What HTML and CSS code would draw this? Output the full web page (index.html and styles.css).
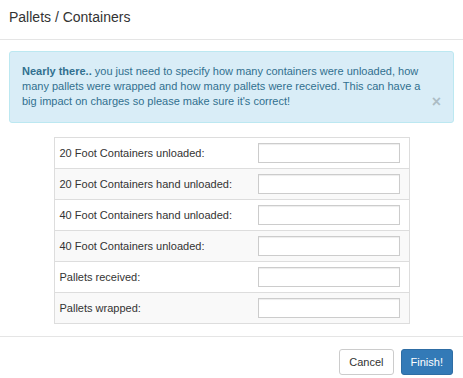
FILE: index.html
```html
<!DOCTYPE html>
<html lang="en">
<head>
    <meta charset="UTF-8">
    <meta name="viewport" content="width=device-width, initial-scale=1.0">
    <title>Pallets / Containers</title>
    <link rel="stylesheet" href="styles.css">
</head>
<body>
    <div class="modal-content">
        <div class="modal-header">
            <h4 class="modal-title">Pallets / Containers</h4>
        </div>
        <div class="modal-body">
            <div class="alert alert-info">
                <strong>Nearly there..</strong> you just need to specify how many containers were unloaded, how many pallets were wrapped and how many pallets were received. This can have a big impact on charges so please make sure it's correct!
                <button type="button" class="close">&times;</button>
            </div>

            <table class="table-striped">
                <colgroup>
                    <col class="col-label">
                    <col class="col-field">
                </colgroup>
                <tr>
                    <td>20 Foot Containers unloaded:</td>
                    <td><input type="text" name="twenty_unloaded"></td>
                </tr>
                <tr>
                    <td>20 Foot Containers hand unloaded:</td>
                    <td><input type="text" name="twenty_hand_unloaded"></td>
                </tr>
                <tr>
                    <td>40 Foot Containers hand unloaded:</td>
                    <td><input type="text" name="forty_hand_unloaded"></td>
                </tr>
                <tr>
                    <td>40 Foot Containers unloaded:</td>
                    <td><input type="text" name="forty_unloaded"></td>
                </tr>
                <tr>
                    <td>Pallets received:</td>
                    <td><input type="text" name="pallets_received"></td>
                </tr>
                <tr>
                    <td>Pallets wrapped:</td>
                    <td><input type="text" name="pallets_wrapped"></td>
                </tr>
            </table>
        </div>
        <div class="modal-footer">
            <button type="button" class="btn btn-default">Cancel</button>
            <button type="button" class="btn btn-primary">Finish!</button>
        </div>
    </div>
</body>
</html>
```

FILE: styles.css
```css
body {
    font-family: "Liberation Sans", Arial, sans-serif;
    font-size: 11px;
    line-height: 15px;
    color: #333;
    background-color: #fff;
    margin: 0;
}

.modal-header {
    padding: 7px 9px 12px 9px;
    border-bottom: 1px solid #e5e5e5;
}

    .modal-header .modal-title {
        margin: 0;
        font-size: 14px;
        font-weight: normal;
        line-height: 20px;
    }

.modal-body {
    padding: 11px 9px 12px 9px;
}

.alert {
    position: relative;
    padding: 12px 27px 13px 12px;
    margin-bottom: 14px;
    border: 1px solid transparent;
    border-radius: 3px;
}

.alert-info {
    color: #31708f;
    background-color: #d9edf7;
    border-color: #bce8f1;
}

    .alert .close {
        position: absolute;
        right: 12px;
        bottom: 13px;
        padding: 0;
        background: transparent;
        border: 0;
        font-family: "Liberation Sans", Arial, sans-serif;
        font-size: 16px;
        font-weight: bold;
        line-height: 15px;
        color: #000;
        opacity: .2;
        cursor: pointer;
    }

.table-striped {
    width: 80%;
    margin: 0 auto;
    table-layout: fixed;
    border-collapse: collapse;
    border: 1px solid #ddd;
}

    .table-striped .col-field {
        width: 156px;
    }

    .table-striped td {
        padding: 5px 6px 5px 5px;
        border-top: 1px solid #ddd;
        vertical-align: middle;
    }

    .table-striped tr:nth-child(even) td {
        background-color: #f9f9f9;
    }

    .table-striped input {
        display: block;
        width: 142px;
        height: 20px;
        box-sizing: border-box;
        margin: 0;
        padding: 2px 5px;
        border: 1px solid #ccc;
        background: #fff;
        box-shadow: inset 0 1px 1px rgba(0, 0, 0, .075);
        font: inherit;
    }

.modal-footer {
    padding: 12px 10px 12px 9px;
    text-align: right;
    border-top: 1px solid #e5e5e5;
}

.btn {
    display: inline-block;
    padding: 5px 9px;
    font-family: "Liberation Sans", Arial, sans-serif;
    font-size: 11px;
    line-height: 14px;
    border: 1px solid transparent;
    border-radius: 3px;
    cursor: pointer;
}

    .btn + .btn {
        margin-left: 4px;
    }

.btn-default {
    color: #333;
    background-color: #fff;
    border-color: #ccc;
}

.btn-primary {
    color: #fff;
    background-color: #337ab7;
    border-color: #2e6da4;
}
```
